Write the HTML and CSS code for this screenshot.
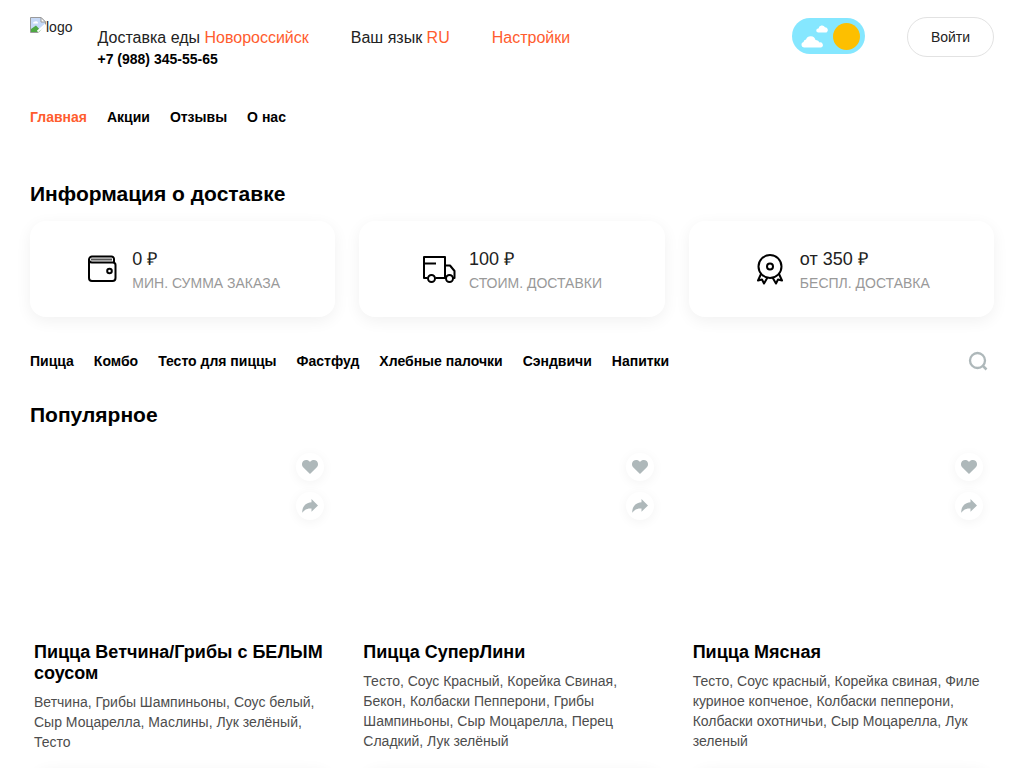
FILE: index.html
```html
<!DOCTYPE html>
<html lang="ru">
<head>
<meta charset="utf-8">
<meta name="viewport" content="width=device-width, initial-scale=1">
<title>Доставка еды</title>
<link rel="stylesheet" href="styles.css">
</head>
<body>
<svg class="sprite" aria-hidden="true">
  <symbol id="heart" viewBox="0 0 16 14"><path d="M8 14 1.4 7.6C-.5 5.700-.4 2.700 1.300 1.100 3.200-.5 6.200-.3 8 2 9.800-.3 12.800-.5 14.700 1.100 16.400 2.700 16.500 5.700 14.600 7.600Z"/></symbol>
  <symbol id="share" viewBox="0 0 16 14"><path d="M9.500 0 16 6.400 9.500 12.800V9.500C5.500 9.100 2.500 10.500.2 13.800 0 8 3.500 3.700 9.500 3.300Z"/></symbol>
</svg>
<div class="page">
  <header class="header">
    <a class="logo" href="#">
      <svg width="16" height="16" viewBox="0 0 16 16" aria-hidden="true"><path d="M.5 .5H11L15.500 5V15.500H.5Z" fill="#c6d9f7" stroke="#9a9a9a"/><path d="M1 15V12L6 8.500 12 15Z" fill="#4ea843"/><path d="M3 6.500a2 2 0 0 1 2-2 2 2 0 0 1 3 2Z" fill="#fff"/><path d="M11 .5V5H15.500Z" fill="#fff" stroke="#9a9a9a"/><path d="M8 16 16 8V16Z" fill="#fff"/><path d="m7.500 14.500 8-7" stroke="#fff" stroke-width="2"/></svg><span>logo</span>
    </a>
    <div class="contacts">
      <div class="place">Доставка еды <a href="#">Новороссийск</a></div>
      <a class="phone" href="tel:+79883455565">+7 (988) 345-55-65</a>
    </div>
    <div class="place language">Ваш язык <a href="#">RU</a></div>
    <div class="place settings"><a href="#">Настройки</a></div>
    <button class="theme" type="button" aria-label="Сменить тему">
      <svg width="73" height="36" viewBox="0 0 73 36" aria-hidden="true"><rect width="73" height="36" rx="18" fill="#85e7ff"/><circle cx="54.500" cy="18.500" r="13.500" fill="#fdbf00"/><path d="M12 29.500a2.800 2.800 0 0 1-.5-5.500 3.200 3.200 0 0 1 2.500-2.600 5 5 0 0 1 9.500.6 4 4 0 0 1 4 2.500 2.600 2.600 0 0 1 1.500 5ZM26 14.500a2 2 0 0 1 .5-4 3.500 3.500 0 0 1 6.500-1.200 2.800 2.800 0 0 1 1.500 5.200Z" fill="#fff"/></svg>
    </button>
    <button class="login" type="button">Войти</button>
  </header>

  <nav class="nav" aria-label="Меню">
    <a class="active" href="#">Главная</a><a href="#">Акции</a><a href="#">Отзывы</a><a href="#">О нас</a>
  </nav>

  <h2 class="heading">Информация о доставке</h2>
  <section class="grid">
    <div class="info">
      <svg width="34" height="30" viewBox="-3 0 34 30" fill="none" stroke="#000" stroke-width="2" stroke-linejoin="round" aria-hidden="true"><path d="M26 8V5a2.500 2.500 0 0 0-2.500-2.500H4.500A3 3 0 0 0 1 5.500V24a3 3 0 0 0 3 3H24.500a3 3 0 0 0 3-3V11a2.500 2.500 0 0 0-2.500-2.500H4A3 3 0 0 1 1 5.500"/><path d="M3 5.500H24" stroke="#555"/><circle cx="21.500" cy="17" r="2.300"/></svg>
      <div><div class="value">0 ₽</div><div class="label">МИН. СУММА ЗАКАЗА</div></div>
    </div>
    <div class="info">
      <svg width="34" height="30" viewBox="0 0 34 30" fill="none" stroke="#000" stroke-width="2" stroke-linejoin="round" aria-hidden="true"><path d="M5.500 24H2V3H23V24H13.500M2 9.500H14M23 11.500H28L32.500 17V24H31M23 24h1"/><circle cx="9.500" cy="24.500" r="3.500"/><circle cx="27.500" cy="24.500" r="3.500"/></svg>
      <div><div class="value">100 ₽</div><div class="label">СТОИМ. ДОСТАВКИ</div></div>
    </div>
    <div class="info">
      <svg width="34" height="32" viewBox="-2 0 34 32" fill="none" stroke="#000" stroke-width="2" stroke-linejoin="round" aria-hidden="true"><circle cx="15" cy="13.500" r="11.500"/><circle cx="15" cy="13.500" r="3"/><path d="M6 21 3 27.500 7 26.500 9 30.500 12.500 24.500M24 21 27 27.500 23 26.500 21 30.500 17.500 24.500"/></svg>
      <div><div class="value">от 350 ₽</div><div class="label">БЕСПЛ. ДОСТАВКА</div></div>
    </div>
  </section>

  <div class="catalog">
    <nav class="nav" aria-label="Категории">
      <a href="#">Пицца</a><a href="#">Комбо</a><a href="#">Тесто для пиццы</a><a href="#">Фастфуд</a><a href="#">Хлебные палочки</a><a href="#">Сэндвичи</a><a href="#">Напитки</a>
    </nav>
    <button class="search" type="button" aria-label="Поиск"><svg width="20" height="20" viewBox="0 0 20 20" fill="none" stroke="#aeb8ba" aria-hidden="true"><circle cx="9.500" cy="9.500" r="7.500" stroke-width="2.300"/><path d="m14.500 14.500 4 4" stroke-width="2.500"/></svg></button>
  </div>

  <h2 class="heading">Популярное</h2>
  <section class="grid products">
    <article class="product">
      <div class="photo">
        <button class="round" type="button" aria-label="В избранное"><svg width="16" height="14"><use href="#heart"/></svg></button>
        <button class="round" type="button" aria-label="Поделиться"><svg width="16" height="14"><use href="#share"/></svg></button>
      </div>
      <h3>Пицца Ветчина/Грибы с БЕЛЫМ соусом</h3>
      <p>Ветчина, Грибы Шампиньоны, Соус белый, Сыр Моцарелла, Маслины, Лук зелёный, Тесто</p>
      <div class="order"></div>
    </article>
    <article class="product">
      <div class="photo">
        <button class="round" type="button" aria-label="В избранное"><svg width="16" height="14"><use href="#heart"/></svg></button>
        <button class="round" type="button" aria-label="Поделиться"><svg width="16" height="14"><use href="#share"/></svg></button>
      </div>
      <h3>Пицца СуперЛини</h3>
      <p>Тесто, Соус Красный, Корейка Свиная, Бекон, Колбаски Пепперони, Грибы Шампиньоны, Сыр Моцарелла, Перец Сладкий, Лук зелёный</p>
      <div class="order"></div>
    </article>
    <article class="product">
      <div class="photo">
        <button class="round" type="button" aria-label="В избранное"><svg width="16" height="14"><use href="#heart"/></svg></button>
        <button class="round" type="button" aria-label="Поделиться"><svg width="16" height="14"><use href="#share"/></svg></button>
      </div>
      <h3>Пицца Мясная</h3>
      <p>Тесто, Соус красный, Корейка свиная, Филе куриное копченое, Колбаски пепперони, Колбаски охотничьи, Сыр Моцарелла, Лук зеленый</p>
      <div class="order"></div>
    </article>
  </section>
</div>
</body>
</html>
```

FILE: styles.css
```css
* { box-sizing: border-box; }
body {
  margin: 0;
  background: #fff;
  color: #000;
  font: 14px/20px "Liberation Sans", Arial, sans-serif;
}
a { color: inherit; text-decoration: none; }
button { padding: 0; border: 0; background: none; font: inherit; color: inherit; cursor: pointer; }
svg { display: block; flex: none; }
h2, h3, p { margin: 0; }
.sprite { position: absolute; width: 0; height: 0; }
.page { padding: 17px 30px 0; }

.header { display: flex; align-items: flex-start; height: 56px; }
.logo { display: flex; margin-right: 25px; color: #222; }
.contacts, .language, .settings { padding-top: 10px; }
.place { font-size: 16px; line-height: 22px; color: #222; white-space: nowrap; }
.place a { color: #ff5c2e; }
.language, .settings { margin-left: 42px; }
.phone { display: block; font-weight: bold; }
.theme { margin: 1px 42px 0 auto; }
.login {
  width: 87px;
  height: 40px;
  border: 1px solid #e2e2e2;
  border-radius: 20px;
  color: #222;
}

.nav { display: flex; gap: 20px; font-weight: bold; white-space: nowrap; }
.header + .nav { margin-top: 34px; }
.nav .active { color: #ff5c2e; }

.heading { font-size: 21px; line-height: 26px; }
.nav + .heading { margin-top: 54px; }

.grid { display: grid; grid-template-columns: repeat(3, minmax(0, 1fr)); gap: 24px; }
.heading + .grid { margin-top: 14px; }
.info {
  display: flex;
  align-items: center;
  justify-content: center;
  gap: 13px;
  height: 96px;
  border-radius: 16px;
  box-shadow: 0 4px 16px rgba(0, 0, 0, 0.06);
}
.value { font-size: 18px; line-height: 28px; color: #222; }
.label { line-height: 20px; color: #999; }

.catalog { display: flex; align-items: center; justify-content: space-between; margin: 34px 0 31px; }
.search { margin-right: 6px; }

.product { display: flex; flex-direction: column; padding: 0 4px; }
.photo {
  display: flex;
  flex-direction: column;
  align-items: flex-end;
  gap: 11px;
  height: 200px;
  padding: 11px 7px 0;
}
.round {
  display: grid;
  place-items: center;
  width: 28px;
  height: 28px;
  border-radius: 50%;
  fill: #aeb8ba;
  box-shadow: 0 2px 12px rgba(0, 0, 0, 0.05);
}
.product h3 { font-size: 18px; line-height: 21px; }
.product p { flex: 1; margin-top: 8px; color: #4d4d4d; }
.order {
  height: 48px;
  margin-top: 16px;
  border-radius: 16px;
  box-shadow: 0 4px 16px rgba(0, 0, 0, 0.06);
}
```
